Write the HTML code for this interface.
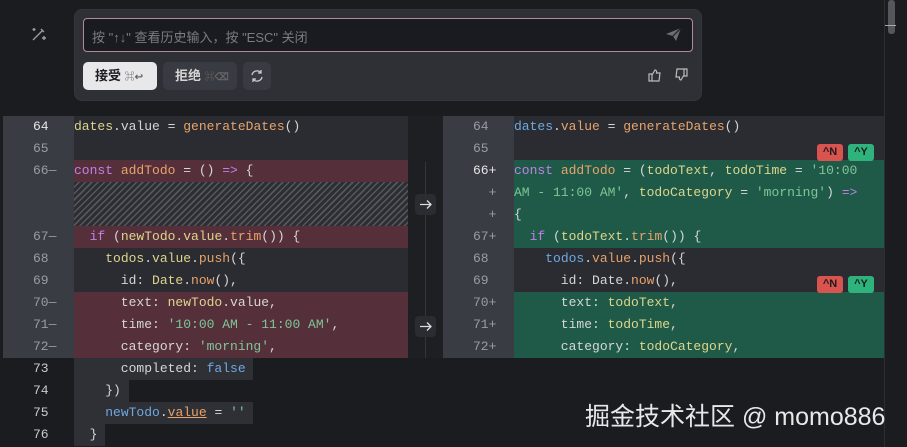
<!DOCTYPE html><html><head><meta charset="utf-8"><style>
*{margin:0;padding:0;box-sizing:border-box}
body{width:907px;height:447px;background:#1b1c20;overflow:hidden;position:relative;font-family:"Liberation Mono",monospace;font-size:13px;color:#d6d6d6}
.a{position:absolute}
.r{position:absolute;height:22px;line-height:22px;white-space:pre}
.ln{position:absolute;height:22px;line-height:22px;font-size:13px;color:#9a9ca3;width:60px;text-align:left;white-space:pre}
.k{color:#c27fe8}.f{color:#e8a36a}.y{color:#ddd58c}.s{color:#7ec699}.b{color:#6fa8e0}.w{color:#d6d6d6}
.cj{font-family:"Liberation Sans","Noto Sans CJK SC",sans-serif}
.bd{position:absolute;width:26px;height:17px;border-radius:3px;font:bold 11px "Liberation Sans",sans-serif;color:#1b1c20;text-align:center;line-height:17px}
</style></head><body>
<!-- scrollbar -->
<div class="a" style="left:884px;top:0;width:1px;height:447px;background:#2c2e33"></div>
<div class="a" style="left:888px;top:0;width:7px;height:34px;background:#55575d;border-radius:3px"></div>
<div class="a" style="left:885px;top:25px;width:11px;height:1px;background:#aaa"></div>
<!-- magic icon -->
<svg class="a" style="left:31px;top:26px" width="16" height="16" viewBox="0 0 16 16" fill="none" stroke="#9a9ca3" stroke-width="1.4"><path d="M2 14L12 4M10 3l3 3M3 2v3M1.5 3.5h3M13 10v4M11 12h4"/></svg>
<!-- popup -->
<div class="a" style="left:74px;top:9px;width:628px;height:92px;background:#2e3036;border-radius:8px;border:1px solid #34363c"></div>
<div class="a" style="left:83px;top:18px;width:610px;height:34px;background:#1a1b20;border-radius:4px;border:1px solid #b28a97"></div>
<div class="a cj" style="left:92px;top:27px;font-size:13px;color:#7a7c82">按 "↑↓" 查看历史输入，按 "ESC" 关闭</div>
<svg class="a" style="left:665px;top:27px" width="17" height="15" viewBox="0 0 17 15"><path d="M1 7L16 1L11 14L8 9Z" fill="#6d6f75"/><path d="M8 9L16 1" stroke="#1a1b20" stroke-width="1.2"/></svg>
<div class="a cj" style="left:83px;top:62px;width:74px;height:28px;background:#e8e8ea;border-radius:5px;font-size:13px;font-weight:bold;color:#1b1c20;line-height:28px;padding-left:12px">接受 <span style="font-size:10px;color:#666">⌘↩</span></div>
<div class="a cj" style="left:163px;top:62px;width:74px;height:28px;background:#393b42;border-radius:5px;font-size:13px;font-weight:bold;color:#d6d6d6;line-height:28px;padding-left:12px">拒绝 <span style="font-size:10px;color:#666">⌘⌫</span></div>
<div class="a" style="left:243px;top:62px;width:28px;height:28px;background:#393b42;border-radius:5px"></div>
<svg class="a" style="left:250px;top:69px" width="14" height="14" viewBox="0 0 14 14" fill="none" stroke="#ccc" stroke-width="1.3"><path d="M2 6a5 5 0 0 1 9-2M12 8a5 5 0 0 1-9 2"/><path d="M11 1v3H8M3 13v-3h3"/></svg>
<svg class="a" style="left:648px;top:68px" width="14" height="14" viewBox="0 0 14 14" fill="none" stroke="#bbb" stroke-width="1.2"><path d="M1 6h3v7H1zM4 7l3-5c1 0 2 1 1.5 3H12l-1 8H4"/></svg>
<svg class="a" style="left:674px;top:68px" width="14" height="14" viewBox="0 0 14 14" fill="none" stroke="#bbb" stroke-width="1.2"><path d="M13 8h-3V1h3zM10 7l-3 5c-1 0-2-1-1.5-3H2l1-8h7"/></svg>

<!-- left panel -->
<div class="a" style="left:3px;top:116px;width:71px;height:242px;background:#3a3c44"></div>
<div class="a" style="left:74px;top:116px;width:334px;height:242px;background:#2a2c32"></div>
<div class="a" style="left:74px;top:160px;width:334px;height:22px;background:#55303a"></div>
<div class="a" style="left:74px;top:182px;width:334px;height:44px;background:repeating-linear-gradient(135deg,#2c2e34 0 3px,#55575c 3px 4.5px)"></div>
<div class="a" style="left:74px;top:226px;width:334px;height:22px;background:#55303a"></div>
<div class="a" style="left:74px;top:292px;width:334px;height:66px;background:#55303a"></div>
<div class="a" style="left:74px;top:358px;width:179px;height:22px;background:#2e3036"></div>
<div class="a" style="left:74px;top:380px;width:55px;height:22px;background:#2e3036"></div>
<div class="a" style="left:74px;top:402px;width:179px;height:22px;background:#2e3036"></div>
<div class="a" style="left:74px;top:424px;width:31px;height:22px;background:#2e3036"></div>

<div class="ln" style="left:33px;top:116px;color:#e6e6e6">64</div>
<div class="ln" style="left:33px;top:138px">65</div>
<div class="ln" style="left:33px;top:160px">66—</div>
<div class="ln" style="left:33px;top:226px">67—</div>
<div class="ln" style="left:33px;top:248px">68</div>
<div class="ln" style="left:33px;top:270px">69</div>
<div class="ln" style="left:33px;top:292px">70—</div>
<div class="ln" style="left:33px;top:314px">71—</div>
<div class="ln" style="left:33px;top:336px">72—</div>
<div class="ln" style="left:33px;top:358px;color:#c9cbd0">73</div>
<div class="ln" style="left:33px;top:380px;color:#c9cbd0">74</div>
<div class="ln" style="left:33px;top:402px;color:#c9cbd0">75</div>
<div class="ln" style="left:33px;top:424px;color:#c9cbd0">76</div>

<div class="r" style="left:74px;top:116px"><span class="y">dates</span>.value = <span class="f">generateDates</span>()</div>
<div class="r" style="left:74px;top:160px"><span class="k">const</span> <span class="f">addTodo</span> = () <span class="k">=&gt;</span> {</div>
<div class="r" style="left:74px;top:226px">  <span class="k">if</span> (<span class="y">newTodo.value</span>.<span class="f">trim</span>()) {</div>
<div class="r" style="left:74px;top:248px">    <span class="y">todos</span>.<span class="y">value</span>.<span class="f">push</span>({</div>
<div class="r" style="left:74px;top:270px">      id: <span class="y">Date</span>.<span class="f">now</span>(),</div>
<div class="r" style="left:74px;top:292px">      text: <span class="y">newTodo</span>.value,</div>
<div class="r" style="left:74px;top:314px">      time: <span class="s">'10:00 AM - 11:00 AM'</span>,</div>
<div class="r" style="left:74px;top:336px">      category: <span class="s">'morning'</span>,</div>
<div class="r" style="left:74px;top:358px">      completed: <span class="b">false</span></div>
<div class="r" style="left:74px;top:380px">    })</div>
<div class="r" style="left:74px;top:402px">    <span class="b">newTodo</span>.<span class="f" style="text-decoration:underline">value</span> = <span class="s">''</span></div>
<div class="r" style="left:74px;top:424px">  }</div>

<!-- middle -->
<div class="a" style="left:408px;top:116px;width:35px;height:242px;background:#1e1f23"></div>
<div class="a" style="left:425px;top:162px;width:1px;height:196px;background:#34363b"></div>
<svg class="a" style="left:415px;top:194px" width="21" height="21" viewBox="0 0 21 21"><rect width="21" height="21" rx="4" fill="#2a2c31"/><path d="M5 10.5h11M12 6.5l4 4-4 4" fill="none" stroke="#ddd" stroke-width="1.3"/></svg>
<svg class="a" style="left:415px;top:316px" width="21" height="21" viewBox="0 0 21 21"><rect width="21" height="21" rx="4" fill="#2a2c31"/><path d="M5 10.5h11M12 6.5l4 4-4 4" fill="none" stroke="#ddd" stroke-width="1.3"/></svg>

<!-- right panel -->
<div class="a" style="left:443px;top:116px;width:71px;height:242px;background:#3a3c44"></div>
<div class="a" style="left:514px;top:116px;width:370px;height:242px;background:#2a2c32"></div>
<div class="a" style="left:514px;top:160px;width:370px;height:88px;background:#1f5a48"></div>
<div class="a" style="left:514px;top:292px;width:370px;height:66px;background:#1f5a48"></div>
<div class="bd" style="left:817px;top:144px;background:#d9534f">^N</div>
<div class="bd" style="left:848px;top:144px;background:#2fb37d">^Y</div>
<div class="bd" style="left:817px;top:276px;background:#d9534f">^N</div>
<div class="bd" style="left:848px;top:276px;background:#2fb37d">^Y</div>

<div class="ln" style="left:473px;top:116px">64</div>
<div class="ln" style="left:473px;top:138px">65</div>
<div class="ln" style="left:473px;top:160px;color:#e6e6e6">66+</div>
<div class="ln" style="left:473px;top:182px">  +</div>
<div class="ln" style="left:473px;top:204px">  +</div>
<div class="ln" style="left:473px;top:226px">67+</div>
<div class="ln" style="left:473px;top:248px">68</div>
<div class="ln" style="left:473px;top:270px">69</div>
<div class="ln" style="left:473px;top:292px">70+</div>
<div class="ln" style="left:473px;top:314px">71+</div>
<div class="ln" style="left:473px;top:336px">72+</div>

<div class="r" style="left:514px;top:116px"><span class="b">dates</span>.<span class="f">value</span> = <span class="f">generateDates</span>()</div>
<div class="r" style="left:514px;top:160px"><span class="k">const</span> <span class="f">addTodo</span> = (<span class="y">todoText</span>, <span class="y">todoTime</span> = <span class="s">'10:00</span></div>
<div class="r" style="left:514px;top:182px"><span class="s">AM - 11:00 AM'</span>, <span class="y">todoCategory</span> = <span class="s">'morning'</span>) <span class="k">=&gt;</span></div>
<div class="r" style="left:514px;top:204px">{</div>
<div class="r" style="left:514px;top:226px">  <span class="k">if</span> (<span class="y">todoText</span>.<span class="f">trim</span>()) {</div>
<div class="r" style="left:514px;top:248px">    <span class="b">todos</span>.<span class="f">value</span>.<span class="f">push</span>({</div>
<div class="r" style="left:514px;top:270px">      id: Date.<span class="f">now</span>(),</div>
<div class="r" style="left:514px;top:292px">      text: <span class="y">todoText</span>,</div>
<div class="r" style="left:514px;top:314px">      time: <span class="y">todoTime</span>,</div>
<div class="r" style="left:514px;top:336px">      category: <span class="y">todoCategory</span>,</div>

<div class="a cj" style="left:585px;top:397px;font-size:25px;color:#e8e8e8;white-space:nowrap">掘金技术社区 @ momo886</div>
</body></html>
